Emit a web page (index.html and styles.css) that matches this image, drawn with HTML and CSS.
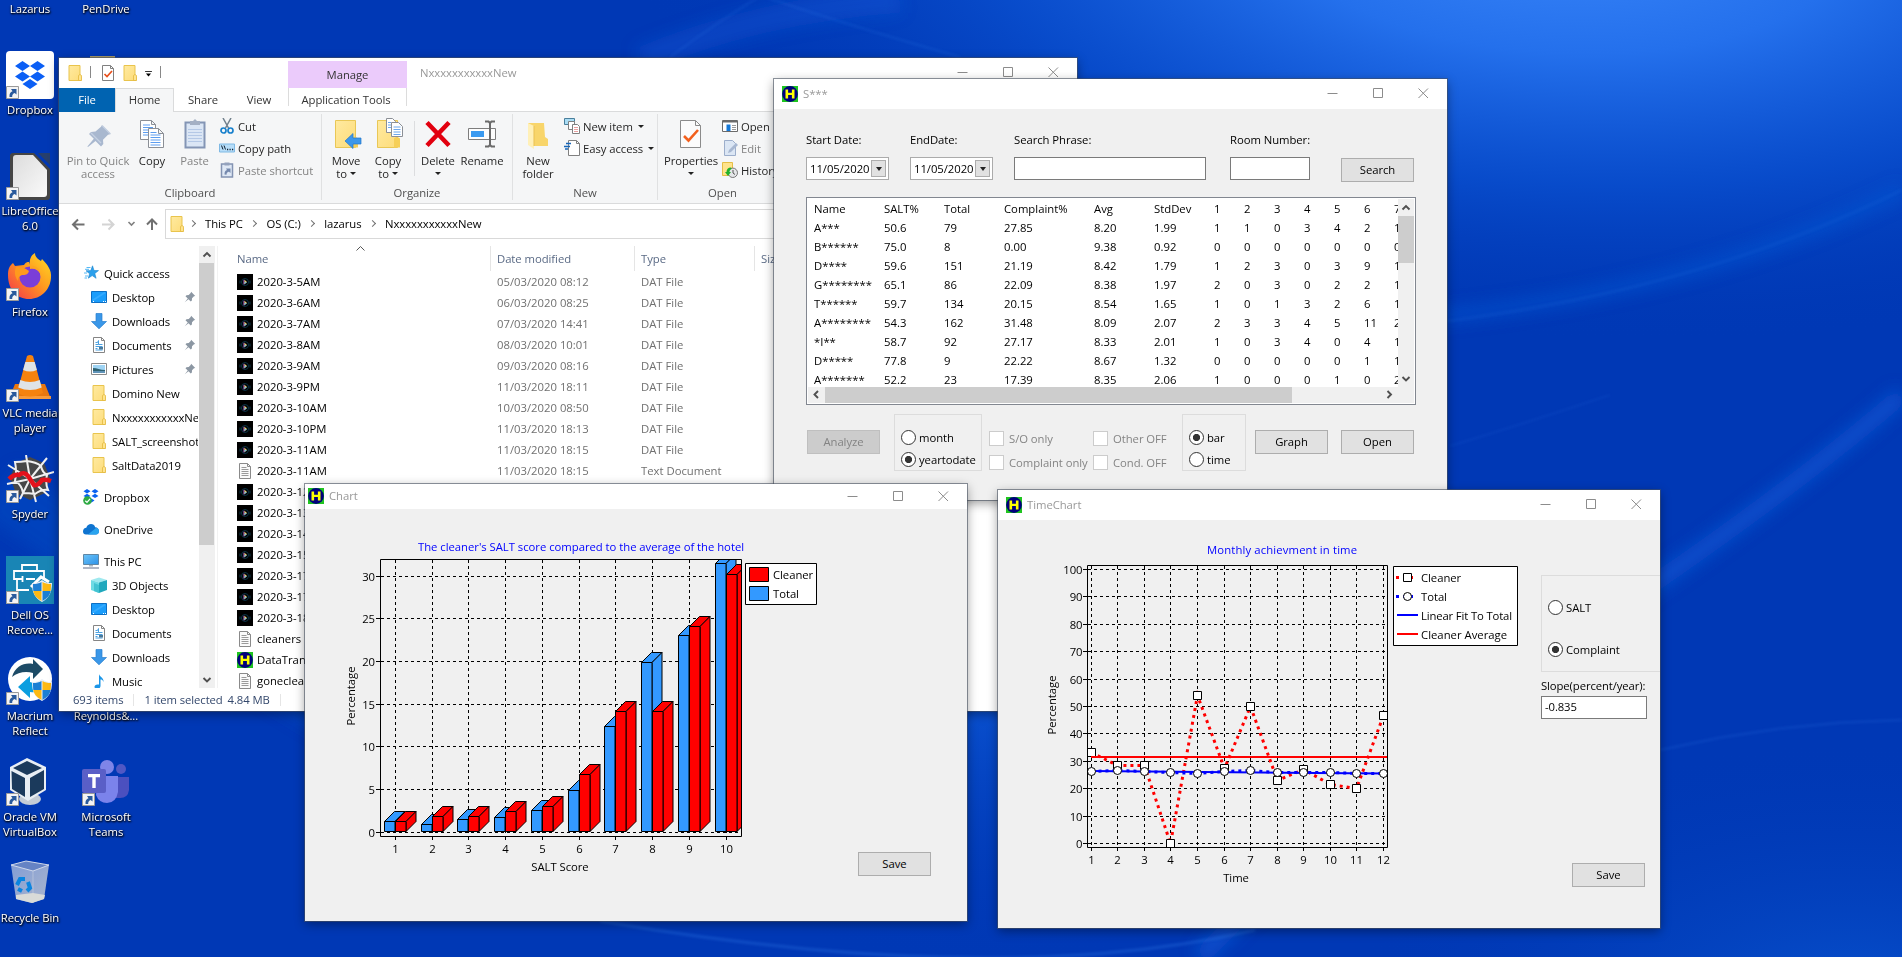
FILE: index.html
```html
<!DOCTYPE html>
<html lang="en">
<head>
<meta charset="utf-8">
<title>Desktop</title>
<link rel="stylesheet" href="styles.css">
</head>
<body>
<svg class="defs" width="0" height="0" aria-hidden="true">
  <defs>
    <linearGradient id="gFolder" x1="0" y1="0" x2="1" y2="1"><stop offset="0" stop-color="#ffeaa0"/><stop offset="1" stop-color="#fddc7a"/></linearGradient>
    <linearGradient id="gScreen" x1="0" y1="0" x2="1" y2="1"><stop offset="0" stop-color="#6cc4f8"/><stop offset="1" stop-color="#2d92e8"/></linearGradient>
    <linearGradient id="gFox" x1="1" y1="0" x2="0" y2="1"><stop offset="0" stop-color="#ffe226"/><stop offset=".45" stop-color="#ff9a1f"/><stop offset="1" stop-color="#f5304e"/></linearGradient>
    <linearGradient id="gPaper" x1="0" y1="0" x2="1" y2="1"><stop offset="0" stop-color="#dcdcdc"/><stop offset="1" stop-color="#fafafa"/></linearGradient>
    <linearGradient id="gBin" x1="0" y1="0" x2="1" y2="1"><stop offset="0" stop-color="#8fa6d8"/><stop offset="1" stop-color="#b9c2d0"/></linearGradient>

    <symbol id="folder" viewBox="0 0 16 16"><path d="M2 .5h11v11l1 .7v3.3H2z" fill="url(#gFolder)" stroke="#e9c44c"/><path d="M11.500 15.500v-5l1.500-1 1.500 1v5z" fill="#ffe48e" stroke="#e3b93e" stroke-width=".8"/></symbol>
    <symbol id="hicon" viewBox="0 0 16 16"><path fill="#1fc41f" d="M0 0h16v16H0z"/><circle cx="8" cy="8" r="7.900" fill="#00007c"/><path d="M3.500 3.500h2.600v3.300h3.800V3.500h2.600v9H9.900V9H6.100v3.500H3.500z" fill="#ff0"/></symbol>
    <symbol id="dat" viewBox="0 0 16 16"><path d="M0 0h16v16H0z"/><circle cx="8" cy="8" r="3.500" fill="none" stroke="#0a3446"/><path d="M3 6.500v3M13 6.500v3" stroke="#0a3446"/><path d="M7 5.800v4.600" stroke="#c86ae0" stroke-width="1"/><path d="M7.500 5.800 10 8l-2.500 2.200z" fill="#e8d070"/><path d="M7.500 8H10l-2.500 2.200z" fill="#7cc0e0"/></symbol>
    <symbol id="txt" viewBox="0 0 16 16"><path d="M2.500.5h8l3 3v12h-11z" fill="#fafafa" stroke="#8a8a8a"/><path d="M10.500.5v3h3" fill="none" stroke="#8a8a8a"/><path d="M4.500 4.500h5M4.500 6.500h7M4.500 8.500h7M4.500 10.500h7M4.500 12.500h7" stroke="#9a9a9a"/></symbol>
    <symbol id="star" viewBox="0 0 16 16"><path d="M9.500.8 11 5.500l4.500.1-3.700 2.900 1.300 4.800-3.900-2.700-3.900 2.600 1.300-4.500L3 5.800l4.800-.2z" fill="#2ba0ec" stroke="#1c86cf" stroke-width=".6"/><path d="M3.500 2.500h4M2 4.300h4M1 8h3M2 11h3M1.500 13h2.500" stroke="#56b8f4"/></symbol>
    <symbol id="desk" viewBox="0 0 16 16"><path d="M.5 2.500h15v11H.5z" fill="#1b9dfb" stroke="#0d6fc4"/><path d="M1.500 11.500 14 3.500" stroke="#35aaff" stroke-width="2"/><path d="M2 12.500h1M12 12.500h1M14 12.500h1" stroke="#fff"/></symbol>
    <symbol id="down" viewBox="0 0 16 16"><path d="M5 .5h6v8h4.500L8 15.800.5 8.500H5z" fill="#3a97e8" stroke="#2a80cf" stroke-width=".7"/></symbol>
    <symbol id="docs" viewBox="0 0 16 16"><path d="M2.500.5h8l3 3v12h-11z" fill="#fff" stroke="#858585"/><path d="M10.500.5v3h3" fill="none" stroke="#858585"/><path d="M4.500 5.500h2l1-2v4h4M4.500 7.500h3M4.500 9.500h7M4.500 11.500h2M4.500 13h7" stroke="#4aa0e0" fill="none"/><path d="M8 10h4v2.500H8z" fill="#4d7a9a"/></symbol>
    <symbol id="pics" viewBox="0 0 16 16"><path d="M.5 2.500h15v11H.5z" fill="#fff" stroke="#8a8a8a"/><path d="M2 4h12v8H2z" fill="#9fd4f4"/><path d="M2 7c4 0 7 2 12 2v3H2z" fill="#2f6271"/><path d="M2 10h12v2H2z" fill="#5f93b8"/></symbol>
    <symbol id="dbx" viewBox="0 0 16 16"><path d="M4 0l3.500 2.200L4 4.400.5 2.200zM12 0l3.500 2.200L12 4.400 8.500 2.200zM4 4.700l3.500 2.200L4 9.100.5 6.900zM12 4.700l3.500 2.200L12 9.100 8.500 6.900zM8.500 9.500l3 2-3 2-3-2z" fill="#0a62f0"/><circle cx="4.500" cy="11.500" r="4.300" fill="#2eaa43"/><path d="M2.300 11.700l1.700 1.700 3-3.500" fill="none" stroke="#fff" stroke-width="1.300"/></symbol>
    <symbol id="cloud" viewBox="0 0 16 16"><path d="M0 10.500C0 8 1.500 6.700 3.300 6.700 4 4.200 6 3 8 3c2 0 3.600 1.200 4.200 3.200C14.500 6.300 16 8 16 10s-1.300 3.500-3.200 3.500H3C1.200 13.500 0 12.200 0 10.500z" fill="#0f74d0"/><path d="M5 13.500 13 7c2 .2 3 1.600 3 3.200 0 2-1.300 3.300-3.200 3.300z" fill="#2aa4ef"/></symbol>
    <symbol id="pc" viewBox="0 0 16 16"><path d="M.5 1.500h15v10H.5z" fill="url(#gScreen)" stroke="#5f87a5"/><path d="M6 12h4v1.500H6z" fill="#a9b6c0"/><path d="M0 15h16" stroke="#8e99ad" stroke-width="1.400"/></symbol>
    <symbol id="cube" viewBox="0 0 16 16"><path d="M0 3 8 .5 16 3 8 5.500z" fill="#9fe9ef"/><path d="M0 3l8 2.500V16l-8-3z" fill="#6fdbe4"/><path d="M16 3 8 5.500V16l8-3z" fill="#20a8bd"/><path d="M3 6l5 2v8l-5-2z" fill="#43c3d2"/></symbol>
    <symbol id="music" viewBox="0 0 16 16"><path d="M8 1c.5 3 5 3.500 4.500 8-.5-2-2-2.500-3-2.500V13c0 1.800-1.500 3-3.200 3S3.500 15 3.500 13.800s1.200-2.300 3-2.300H8z" fill="#1b96e8"/></symbol>
    <symbol id="pin" viewBox="0 0 16 16"><path d="M9.500 1 15 6.500l-1.700.6-2.600 2.600-.2 3-1.500 1.200-3-3L1 15l4-5-3-3 1.300-1.500 3-.2L8.900 2.700z" fill="#8c97a3"/></symbol>
    <symbol id="bigpin" viewBox="0 0 32 32"><path d="M20 7l9 9-3 .7-5 5 .3 4.300-2.300 2.500-5.500-5.500L6 29l-.6-.6 6.400-7.600L7 16l2-2 4.500-.5 5.500-4.700z" fill="#a9b8cf"/><path d="M20.500 8l7.500 7.500M9 15l10 10" stroke="#c5d0e2" stroke-width="1.300"/></symbol>
    <symbol id="copy" viewBox="0 0 32 32"><g fill="#fff" stroke="#8b8f96"><path d="M4.500 2.500h11l4 4v15h-15zM15.500 2.500v4h4"/><path d="M12.500 10.500h10l5 5v14h-15zM22.500 10.500v5h5"/></g><path d="M7 7h7M7 9.500h10M7 12h5M7 14.500h5M7 17h5M14.500 14.500h6M14.500 17h10M14.500 19.500h10M14.500 22h10M14.500 24.500h10M14.500 27h10" stroke="#5c9df0"/></symbol>
    <symbol id="paste" viewBox="0 0 32 32"><path d="M6.500 4.500h19v25h-19z" fill="#dbe6f5" stroke="#8495b5" stroke-width="2"/><path d="M11 3h3l2-2 2 2h3v4H11z" fill="#a4b0c4"/><path d="M9 11.500h14M9 14.500h14M9 17.500h14M9 20.500h14M9 23.500h14" stroke="#b4c8e6"/></symbol>
    <symbol id="cut" viewBox="0 0 16 16"><path d="M4 0l5.500 10M12 0 6.500 10" stroke="#72808c" stroke-width="1.500"/><circle cx="4.500" cy="12.500" r="2.500" fill="none" stroke="#1880cc" stroke-width="1.700"/><circle cx="11.500" cy="12.500" r="2.500" fill="none" stroke="#1880cc" stroke-width="1.700"/></symbol>
    <symbol id="path" viewBox="0 0 16 16"><path d="M.5 4h15v8H.5z" fill="#b7ddf8" stroke="#7fb9e4"/><path d="M2.500 5.500l1.500 4M5 5.500l1.500 4" stroke="#102030"/><path d="M8 9.500h1.200M10.500 9.500h1.200M13 9.500h1.200" stroke="#102030" stroke-width="1.400"/></symbol>
    <symbol id="pshort" viewBox="0 0 16 16"><path d="M2.500 2h11v13h-11z" fill="#dfe8f5" stroke="#8393b2" stroke-width="1.500"/><path d="M5.500.5h5v3h-5z" fill="#94a2bc"/><path d="M5.500 12.500c0-3 1-4 2.500-4.500L7 6.500h4.500V11L10 9.700c-1.700.3-2.500 1.300-2.500 3z" fill="#7589ae"/></symbol>
    <symbol id="bigfolder" viewBox="0 0 32 32"><path d="M5.500 2.500h20v27h-20z" fill="url(#gFolder)" stroke="#e9c756"/><path d="M22 29.500v-9l3-2 3 2v9z" fill="#f6cf58"/></symbol>
    <symbol id="moveto" viewBox="0 0 32 32"><use href="#bigfolder" width="32" height="32"/><path d="M15 23l8-7.500v4.500h8v6h-8v4.500z" fill="#3d97ea" stroke="#2277c8" stroke-width=".7"/></symbol>
    <symbol id="copyto" viewBox="0 0 32 32"><use href="#bigfolder" width="32" height="32"/><g fill="#fff" stroke="#8b8f96"><path d="M14.500.5h6l3 3v11h-9z"/><path d="M19.500 4.500h7l4 4v10h-11z"/></g><path d="M16 4.500h3M16 7h3M16 9.500h3M21.500 9h7M21.500 11.500h7M21.500 14h7M21.500 16.500h7" stroke="#6da8ee"/></symbol>
    <symbol id="delete" viewBox="0 0 32 32"><path d="M5 4.500l22 23M27 4.500l-22 23" stroke="#e2000f" stroke-width="4.600"/></symbol>
    <symbol id="rename" viewBox="0 0 32 32"><path d="M2.500 10.500h27v11h-27z" fill="#fdfdfd" stroke="#7d7d7d"/><path d="M5 13h13v6H5z" fill="#3a9af0"/><path d="M19 3.500h3.500l1.500 1.500 1.500-1.500H29M19 28.500h3.500L24 27l1.500 1.500H29M24 5v22" fill="none" stroke="#6a6a6a" stroke-width="2"/></symbol>
    <symbol id="newfolder" viewBox="0 0 32 32"><path d="M6 5h16l1 14 3 2v7H12z" fill="#f8d56b"/><path d="M6 5l6 3v23l-6-4z" fill="#fff0b8"/><path d="M12 8v20" stroke="#e9c152"/></symbol>
    <symbol id="newitem" viewBox="0 0 16 16"><path d="M.5.5h10v6H.5z" fill="#a9dcf4" stroke="#4a7f9c"/><path d="M4.500 3.500h6v8h-6z" fill="#fff" stroke="#808080"/><path d="M8.500 6.500h5l2 2v7h-7z" fill="#fff" stroke="#808080"/><path d="M10 9.500h4M10 11.500h4M10 13.500h4" stroke="#e8a0a0"/></symbol>
    <symbol id="easy" viewBox="0 0 16 16"><path d="M4.500.5h8l3 3v12h-11z" fill="#fff" stroke="#808080"/><path d="M12.500.5v3h3" fill="none" stroke="#808080"/><path d="M2 3.500h5M0 6.500h6M1 9h3" stroke="#1766b8" stroke-width="1.300"/></symbol>
    <symbol id="props" viewBox="0 0 32 32"><path d="M5.500 2.500h15l5 5v22h-20z" fill="#fbfbfb" stroke="#8b8b8b"/><path d="M20.500 2.500v5h5" fill="none" stroke="#8b8b8b"/><path d="M9 18l4.500 4.500L23 12" fill="none" stroke="#f2601d" stroke-width="2.600"/></symbol>
    <symbol id="openw" viewBox="0 0 16 16"><path d="M.5 2.500h15v11H.5z" fill="#fff" stroke="#6b6b6b"/><path d="M1 3.500h14" stroke="#6b6b6b" stroke-width="2"/><path d="M4.500 6.500h4V13h-4z" fill="#1579d8"/><path d="M10 7.500h4M10 9.500h4M10 11.500h4" stroke="#999"/></symbol>
    <symbol id="edit" viewBox="0 0 16 16"><path d="M2.500.5h8l3 3v12h-11z" fill="#dbe6f4" stroke="#9caecb"/><path d="M6 13l1-3 7-7 2 2-7 7z" fill="#a7b7d1"/></symbol>
    <symbol id="hist" viewBox="0 0 16 16"><path d="M.5.500h10v13H.5z" fill="#ffe38c" stroke="#e5be45"/><circle cx="10.800" cy="10.800" r="4.700" fill="#e4e6e8" stroke="#777"/><path d="M11 8v3l2 1.500" fill="none" stroke="#555"/><path d="M9 5.500c-3 0-4.500 2-4.500 4.500H3l3 4 3-4H7.500c0-1.500.6-2.500 2-3z" fill="#22b12b"/></symbol>
    <symbol id="qprops" viewBox="0 0 16 16"><path d="M2.500.5h8l3 3v12h-11z" fill="#fff" stroke="#808080"/><path d="M10.500.5v3h3" fill="none" stroke="#808080"/><path d="M4.500 9l2.500 2.500L12 6" fill="none" stroke="#e8501c" stroke-width="1.700"/></symbol>

    <symbol id="shortcut" viewBox="0 0 13 13"><path d="M.5.500h12v12H.5z" fill="#f4f4f4" stroke="#9a9a9a"/><path d="M3.500 11c-.3-3.500.8-5 3-5.800L5 3h5.500v5.500L8.700 7C7 7.500 6 9 6.200 11z" fill="#2a5a9c"/></symbol>
    <symbol id="shield" viewBox="0 0 20 22"><path d="M10 0c3 2.500 6 3 10 3 0 10-3 15-10 19C3 18 0 13 0 3c4 0 7-.5 10-3z" fill="#e8eef6"/><path d="M9.500 2v9H1.300C1 8.500 1 6 1 4c3.500 0 6-.5 8.500-2zM10.500 11h8.200c-.8 4-3 7-8.200 10z" fill="#1c7fd4"/><path d="M10.500 2v9h8.200C19 8.500 19 6 19 4c-3.500 0-6-.5-8.500-2zM9.500 11H1.300c.8 4 3 7 8.200 10z" fill="#fdb913"/></symbol>
    <symbol id="d-dropbox" viewBox="0 0 48 48"><rect width="48" height="48" rx="4" fill="#fff"/><path d="M16.500 10l7.500 5-7.500 5L9 15zM31.500 10l7.500 5-7.500 5-7.500-5zM16.500 20.500l7.500 5-7.500 5-7.500-5zM31.500 20.500l7.500 5-7.500 5-7.500-5zM24 28l7.500 5-7.500 5-7.500-5z" fill="#0b5ff5"/></symbol>
    <symbol id="d-libre" viewBox="0 0 48 48"><path d="M4 4q0-3 3-3h21l16 16v28q0 3-3 3H7q-3 0-3-3z" fill="#454545"/><path d="M7 6q0-3 3-3h17l14 15v24q0 3-3 3H10q-3 0-3-3z" fill="url(#gPaper)"/><path d="M32 1h12v12z" fill="#273f6c"/></symbol>
    <symbol id="d-fox" viewBox="0 0 48 48"><path d="M2 22c0-5 1-9 5-12l2 3c3 0 6-1 9-1 2-3 3-3 5-3l1 3c-1-5 1-10 5-12 0 4 3 6 6 8l1-2c5 5 10 11 9 19-1 12-10 21-22 21S2 37 2 22z" fill="url(#gFox)"/><circle cx="24" cy="24" r="10.500" fill="#7a3ed8"/><path d="M24 13c6-1 10 3 10.500 8-2-4-6-6-10.500-5z" fill="#ffa51f"/><path d="M10 14c5 0 8 0 13 4-1 4-4 4-7 4-3 1-4 3-4 6-3-4-4-9-2-14z" fill="#ff9a1d"/></symbol>
    <symbol id="d-vlc" viewBox="0 0 48 48"><path d="M9 30h30l6 15H3z" fill="#e8770f"/><path d="M3 42h42v3H3z" fill="#f89a3a"/><path d="M21 2q3-2 6 0l10 37q-13 7-26 0z" fill="#f5820f"/><path d="M19.300 8h9.400l2.200 8q-6.900 3-13.800 0zM14.300 26q9.700 4 19.400 0l2 7.500q-11.700 5-23.400 0z" fill="#dfe3e6"/></symbol>
    <symbol id="d-spyder" viewBox="0 0 48 48"><path d="M24 2l14 6 6 15-5 15-15 7-14-7-6-15 6-15z" fill="#474747"/><g stroke="#f0f0f0" stroke-width="2" fill="none"><path d="M24 24 20 0M24 24 41 3M24 24 48 17M24 24 43 41M24 24 30 47M24 24 14 44M24 24 1 29M24 24 2 10M9 7q6 0 12-1 9 1 14 5 1 6 6 9-2 8 1 15-6-1-13 4-6-1-12-1-1-8-8-12 2-9 0-19z"/></g><path d="M3 24q5-5 10-4 5-4 9 1l6 9q4 1 8-5 4-1 9 1" fill="none" stroke="#e3121c" stroke-width="4.500"/></symbol>
    <symbol id="d-dell" viewBox="0 0 48 48"><path fill="#1985b5" d="M0 0h48v48H0z"/><g fill="none" stroke="#fff" stroke-width="1.800"><path d="M16 14V9h15v5M8 24v-9h30v8M8 23h8M20 23h9M16.500 20v6M11 24v10h12"/><path d="M25 31l10-10 8 5" stroke-width="3"/></g><use href="#shield" x="26" y="24" width="20" height="22"/></symbol>
    <symbol id="d-macrium" viewBox="0 0 48 48"><circle cx="24" cy="22" r="22" fill="#fff"/><path d="M6 20C9 9 19 5 27 7V2l10 10-10 10v-6C20 14 12 15 6 20z" fill="#1d4b66"/><path d="M43 27c-4 7-11 9-19 8v6L12 30l12-11v6c8 3 14 4 19 2z" fill="#0a9ee0"/><use href="#shield" x="26" y="22" width="20" height="22"/></symbol>
    <symbol id="d-vbox" viewBox="0 0 48 48"><ellipse cx="24" cy="41" rx="11" ry="6" fill="#c4ccd6"/><path d="M21 0 40 9v23L22 43 4 32V9z" fill="#e8eef4"/><path d="M21 3 36 10 21 17 7 10zM5.500 13 19 20v19L6 31zM24 20l14-8v19L24 39z" fill="#1b3a5c"/></symbol>
    <symbol id="d-bin" viewBox="0 0 48 48"><path d="M5 6l38 0-5 34-12 4-16-4z" fill="url(#gBin)" opacity=".92"/><path d="M5 6 20 2l23 4-16 6z" fill="#6583c4" stroke="#cfd8ea"/><path d="M27 12v32" stroke="#c6cede" opacity=".6"/><path d="M10 36l17-2 12 2-1 4-12 4-16-4z" fill="#d9dbd8"/><g fill="none" stroke="#0a84e0" stroke-width="4"><path d="M11 26l3-6 5 0M22 23l2 6-3 3M16 32l-4-2"/></g></symbol>
    <symbol id="d-teams" viewBox="0 0 48 48"><circle cx="25" cy="9" r="7" fill="#7f85e8"/><circle cx="39" cy="11" r="5" fill="#5158c4"/><path d="M30 19h17v13q-1 8-9 8h-8z" fill="#4b50bf"/><path d="M16 18h20v16q-2 11-11 11-8 0-11-8z" fill="#7b83eb"/><rect y="11" width="24" height="24" rx="2" fill="#5a5fc7"/><path d="M6 16h12v3.200h-4.300V30h-3.400V19.200H6z" fill="#fff"/></symbol>
  </defs>
</svg>

<div class="desktop">
  <svg class="wallpaper" viewBox="0 0 1902 957" preserveAspectRatio="none">
    <defs>
      <radialGradient id="wTop" gradientUnits="userSpaceOnUse" cx="0" cy="0" r="1" gradientTransform="translate(1560 -70) rotate(3) scale(960 410)"><stop offset="0" stop-color="#3a86fa"/><stop offset=".3" stop-color="#2470ec"/><stop offset=".62" stop-color="#0a50d0" stop-opacity=".8"/><stop offset="1" stop-color="#0038b5" stop-opacity="0"/></radialGradient>
      <radialGradient id="wMid" gradientUnits="userSpaceOnUse" cx="0" cy="0" r="1" gradientTransform="translate(980 640) scale(420 330)"><stop offset="0" stop-color="#0e5cdc"/><stop offset="1" stop-color="#0038b5" stop-opacity="0"/></radialGradient>
      <radialGradient id="wBr" gradientUnits="userSpaceOnUse" cx="0" cy="0" r="1" gradientTransform="translate(1850 1000) scale(500 260)"><stop offset="0" stop-color="#0750cc"/><stop offset="1" stop-color="#0038b5" stop-opacity="0"/></radialGradient>
      <filter id="soft" x="-20%" y="-20%" width="140%" height="140%"><feGaussianBlur stdDeviation="8"/></filter>
      <filter id="soft2" x="-20%" y="-50%" width="140%" height="200%"><feGaussianBlur stdDeviation="1.500"/></filter>
    </defs>
    <path fill="#0038b5" d="M0 0h1902v957H0z"/>
    <path fill="url(#wTop)" d="M0 0h1902v957H0z"/>
    <path fill="url(#wMid)" d="M0 0h1902v957H0z"/>
    <path fill="url(#wBr)" d="M0 0h1902v957H0z"/>
    <g fill="none" filter="url(#soft)">
      <path d="M1902 395Q1780 500 1600 620T1200 957" stroke="#0a5ad8" stroke-width="18" opacity=".65"/>
      <path d="M1902 190Q1700 290 1440 316" stroke="#0a5ad8" stroke-width="14" opacity=".5"/>
      <path d="M0 490Q300 700 600 860" stroke="#0a52cc" stroke-width="60" opacity=".35"/>
      <path d="M640 60Q760 10 900 0" stroke="#1560e0" stroke-width="26" opacity=".3"/>
    </g>
    <g fill="none" stroke="#3a86f0" filter="url(#soft2)" opacity=".4">
      <path d="M670 57Q720 20 770-10M760-5Q830 20 960 57"/>
      <path d="M1440 322Q1700 290 1902 190" stroke-width="2" opacity=".4"/>
      <path d="M1660 750Q1780 722 1902 720"/>
      <path d="M1450 446Q1520 425 1610 395" opacity=".6"/>
      <path d="M600 921Q1000 990 1255 930" stroke-width="2"/>
    </g>
  </svg>

  <div class="icons">
    <div class="dicon r1 c1"><i class="pic"></i><span>Lazarus</span></div>
    <div class="dicon r2 c1"><i class="pic"><svg><use href="#d-dropbox"/></svg><svg class="sc"><use href="#shortcut"/></svg></i><span>Dropbox</span></div>
    <div class="dicon r3 c1"><i class="pic"><svg><use href="#d-libre"/></svg><svg class="sc"><use href="#shortcut"/></svg></i><span>LibreOffice<br>6.0</span></div>
    <div class="dicon r4 c1"><i class="pic"><svg><use href="#d-fox"/></svg><svg class="sc"><use href="#shortcut"/></svg></i><span>Firefox</span></div>
    <div class="dicon r5 c1"><i class="pic"><svg><use href="#d-vlc"/></svg><svg class="sc"><use href="#shortcut"/></svg></i><span>VLC media<br>player</span></div>
    <div class="dicon r6 c1"><i class="pic"><svg><use href="#d-spyder"/></svg><svg class="sc"><use href="#shortcut"/></svg></i><span>Spyder</span></div>
    <div class="dicon r7 c1"><i class="pic"><svg><use href="#d-dell"/></svg><svg class="sc"><use href="#shortcut"/></svg></i><span>Dell OS<br>Recove...</span></div>
    <div class="dicon r8 c1"><i class="pic"><svg><use href="#d-macrium"/></svg><svg class="sc"><use href="#shortcut"/></svg></i><span>Macrium<br>Reflect</span></div>
    <div class="dicon r9 c1"><i class="pic"><svg><use href="#d-vbox"/></svg><svg class="sc"><use href="#shortcut"/></svg></i><span>Oracle VM<br>VirtualBox</span></div>
    <div class="dicon r10 c1"><i class="pic"><svg><use href="#d-bin"/></svg></i><span>Recycle Bin</span></div>
    <div class="dicon r1 c2"><i class="pic"></i><span>PenDrive</span></div>
    <div class="dicon r2 c2"><i class="pic sliver"></i></div>
    <div class="dicon r8 c2"><i class="pic"></i><span>Reynolds&amp;...</span></div>
    <div class="dicon r9 c2"><i class="pic"><svg><use href="#d-teams"/></svg><svg class="sc"><use href="#shortcut"/></svg></i><span>Microsoft<br>Teams</span></div>
  </div>

  <section class="win explorer">
    <div class="ex-title">
      <div class="quick"><svg class="i16"><use href="#folder"/></svg><i class="bar"></i><svg class="i16"><use href="#qprops"/></svg><svg class="i16"><use href="#folder"/></svg><svg class="caret" viewBox="0 0 8 7"><path d="M0 .5h8" stroke="#000"/><path d="M1 3h6L4 6.500z"/></svg><i class="bar last"></i></div>
      <div class="manage">Manage</div>
      <div class="ex-name">NxxxxxxxxxxxNew</div>
      <svg class="ctl" width="102" height="12" viewBox="0 0 102 12"><path d="M.5 6.500h10M46.500 1.500h9v9h-9zM91.500 1.500l9.500 9.500M101 1.500l-9.500 9.500" fill="none" stroke="#8c8c8c"/></svg>
    </div>
    <div class="tabs"><span class="tab file">File</span><span class="tab home">Home</span><span class="tab share">Share</span><span class="tab view">View</span><span class="tab tools">Application Tools</span></div>
    <div class="ribbon">
      <div class="group g-clip">
        <div class="gbody">
          <div class="big dim w64"><svg><use href="#bigpin"/></svg><b>Pin to Quick<br>access</b></div>
          <div class="big w44"><svg><use href="#copy"/></svg><b>Copy</b></div>
          <div class="big dim w41"><svg><use href="#paste"/></svg><b>Paste</b></div>
          <div class="small"><p><svg><use href="#cut"/></svg>Cut</p><p><svg><use href="#path"/></svg>Copy path</p><p class="dim"><svg><use href="#pshort"/></svg>Paste shortcut</p></div>
        </div>
        <div class="glabel">Clipboard</div>
      </div>
      <div class="group g-org">
        <div class="gbody">
          <div class="big w42"><svg><use href="#moveto"/></svg><b>Move<br>to <i class="dd"></i></b></div>
          <div class="big w42"><svg><use href="#copyto"/></svg><b>Copy<br>to <i class="dd"></i></b></div>
          <i class="vsep"></i>
          <div class="big w40"><svg><use href="#delete"/></svg><b>Delete<br><i class="dd"></i></b></div>
          <div class="big w48"><svg><use href="#rename"/></svg><b>Rename</b></div>
        </div>
        <div class="glabel">Organize</div>
      </div>
      <div class="group g-new">
        <div class="gbody">
          <div class="big w44"><svg><use href="#newfolder"/></svg><b>New<br>folder</b></div>
          <div class="small"><p><svg><use href="#newitem"/></svg>New item <i class="dd"></i></p><p><svg><use href="#easy"/></svg>Easy access <i class="dd"></i></p></div>
        </div>
        <div class="glabel">New</div>
      </div>
      <div class="group g-open">
        <div class="gbody">
          <div class="big w60"><svg><use href="#props"/></svg><b>Properties<br><i class="dd"></i></b></div>
          <div class="small"><p><svg><use href="#openw"/></svg>Open</p><p class="dim"><svg><use href="#edit"/></svg>Edit</p><p><svg><use href="#hist"/></svg>History</p></div>
        </div>
        <div class="glabel">Open</div>
      </div>
    </div>
    <div class="nav">
      <svg class="arrows" width="106" height="30" viewBox="0 0 106 30"><g fill="none" stroke-width="2"><path d="M25.500 15.500H14M19 10.500l-5 5 5 5" stroke="#707070"/><path d="M43 15.500h11M49.500 10.500l5 5-5 5" stroke="#d4d4d4"/><path d="M69.500 13l3 3 3-3" stroke="#808080" stroke-width="1.600"/><path d="M93 21V10.500M88 15.500l5-5 5 5" stroke="#707070"/></g></svg>
      <div class="addr"><svg class="i16"><use href="#folder"/></svg><i class="chev"></i><span>This PC</span><i class="chev"></i><span>OS (C:)</span><i class="chev"></i><span>lazarus</span><i class="chev"></i><span>NxxxxxxxxxxxNew</span></div>
    </div>
    <div class="ex-main">
      <div class="side" id="side"></div>
      <div class="vscroll"><svg viewBox="0 0 16 17"><path d="M4.500 10.500 8 7l3.500 3.500" fill="none" stroke="#505050" stroke-width="1.900"/></svg><i class="thumb"></i><svg class="end" viewBox="0 0 16 17"><path d="M4.500 7 8 10.500 11.500 7" fill="none" stroke="#505050" stroke-width="1.900"/></svg></div>
      <div class="files">
        <div class="fhead"><span class="f1">Name<svg width="9" height="5" viewBox="0 0 9 5"><path d="M.5 4.500l4-4 4 4" fill="none" stroke="#555"/></svg></span><span class="f2">Date modified</span><span class="f3">Type</span><span class="f4">Size</span></div>
        <div id="files"></div>
      </div>
    </div>
    <div class="status"><span>693 items</span><i></i><span>1 item selected</span><span class="sz">4.84 MB</span><i></i></div>
  </section>

  <section class="win salt">
    <header class="bar30"><svg class="i16"><use href="#hicon"/></svg><span>S***</span><svg class="ctl" width="102" height="12" viewBox="0 0 102 12"><path d="M.5 6.500h10M46.500 1.500h9v9h-9zM91.500 1.500l9.500 9.500M101 1.500l-9.500 9.500" fill="none" stroke="#8c8c8c"/></svg></header>
    <div class="form">
      <label class="fld d">Start Date:<span class="inp date">11/05/2020<i><b class="dd"></b></i></span></label>
      <label class="fld d">EndDate:<span class="inp date">11/05/2020<i><b class="dd"></b></i></span></label>
      <label class="fld ph">Search Phrase:<span class="inp"></span></label>
      <label class="fld rn">Room Number:<span class="inp"></span></label>
      <span class="btn">Search</span>
    </div>
    <div class="list">
      <div class="ltop"><div class="rows" id="rows"></div>
        <div class="vs"><svg viewBox="0 0 16 17"><path d="M4.500 10.500 8 7l3.500 3.500" fill="none" stroke="#505050" stroke-width="1.900"/></svg><i></i><svg class="end" viewBox="0 0 16 17"><path d="M4.500 7 8 10.500 11.500 7" fill="none" stroke="#505050" stroke-width="1.900"/></svg></div></div>
      <div class="hs"><svg viewBox="0 0 17 16"><path d="M10 4 6.500 7.500 10 11" fill="none" stroke="#505050" stroke-width="1.900"/></svg><i></i><svg class="end" viewBox="0 0 17 16"><path d="M6.500 4 10 7.500 6.500 11" fill="none" stroke="#505050" stroke-width="1.900"/></svg></div>
    </div>
    <div class="opts">
      <span class="btn off">Analyze</span>
      <div class="gb gb1"><span class="rad">month</span><span class="rad on">yeartodate</span></div>
      <div class="checks"><span>S/O only</span><span>Other OFF</span><span>Complaint only</span><span>Cond. OFF</span></div>
      <div class="gb gb2"><span class="rad on">bar</span><span class="rad">time</span></div>
      <span class="btn">Graph</span>
      <span class="btn open">Open</span>
    </div>
  </section>

  <section class="win chart">
    <header class="bar25"><svg class="i16"><use href="#hicon"/></svg><span>Chart</span><svg class="ctl" width="102" height="12" viewBox="0 0 102 12"><path d="M.5 6.500h10M46.500 1.500h9v9h-9zM91.500 1.500l9.500 9.500M101 1.500l-9.500 9.500" fill="none" stroke="#8c8c8c"/></svg></header>
    <div class="cbody"><svg id="bars" width="553" height="411" viewBox="305 509 553 411"></svg><span class="btn save1">Save</span></div>
  </section>

  <section class="win time">
    <header class="bar30"><svg class="i16"><use href="#hicon"/></svg><span>TimeChart</span><svg class="ctl" width="102" height="12" viewBox="0 0 102 12"><path d="M.5 6.500h10M46.500 1.500h9v9h-9zM91.500 1.500l9.500 9.500M101 1.500l-9.500 9.500" fill="none" stroke="#8c8c8c"/></svg></header>
    <div class="cbody"><svg id="lines" width="543" height="408" viewBox="998 520 543 408"></svg>
      <div class="tside"><div class="gb gb3"><span class="rad">SALT</span><span class="rad on">Complaint</span></div><label>Slope(percent/year):<span class="inp">-0.835</span></label><span class="btn save2">Save</span></div>
    </div>
  </section>
</div>
<script src="app.js"></script>
</body>
</html>
```
FILE: styles.css
```css
* { box-sizing: border-box; }
body { margin: 0; overflow: hidden; font: 11.3px/15px "Open Sans", "Noto Sans", sans-serif; letter-spacing: -.05px; color: #000; }
i, b { font-style: normal; font-weight: normal; }
p { margin: 0; }
svg { display: block; flex: none; }
.defs { position: absolute; }
.i16 { width: 16px; height: 16px; }
.dd { display: inline-block; border: solid transparent; border-width: 3px 3px 0; border-top-color: #222; vertical-align: 2px; }
.desktop { position: relative; width: 1902px; height: 957px; overflow: hidden; }
.wallpaper { position: absolute; inset: 0; width: 1902px; height: 957px; }

/* desktop icons */
.icons { position: absolute; left: -8px; top: -50px; display: grid; grid-template-columns: 76px 76px; grid-template-rows: repeat(10, 101px); }
.dicon { display: flex; flex-direction: column; align-items: center; color: #fff; text-align: center; white-space: nowrap; text-shadow: 1px 1px 2px #000, 0 1px 2px #000; }
.dicon .pic { position: relative; width: 48px; height: 48px; margin-bottom: 3px; }
.dicon .pic svg { width: 48px; height: 48px; }
.dicon .pic .sc { position: absolute; left: 0; bottom: 0; width: 13px; height: 13px; }
.dicon .sliver { width: 25px; margin: 5px 8px 0 0; background: #a89a68; }
.c1 { grid-column: 1; } .c2 { grid-column: 2; }
.r1 { grid-row: 1; } .r2 { grid-row: 2; } .r3 { grid-row: 3; } .r4 { grid-row: 4; } .r5 { grid-row: 5; }
.r6 { grid-row: 6; } .r7 { grid-row: 7; } .r8 { grid-row: 8; } .r9 { grid-row: 9; } .r10 { grid-row: 10; }

/* windows */
.win { position: absolute; display: flex; flex-direction: column; background: #f0f0f0; box-shadow: 0 0 0 1px rgba(70,80,95,.6), 0 3px 10px rgba(0,0,0,.4); overflow: hidden; }
.explorer { left: 59px; top: 58px; width: 1018px; height: 653px; background: #fff; }
.salt { left: 774px; top: 79px; width: 673px; height: 421px; }
.chart { left: 305px; top: 484px; width: 662px; height: 437px; }
.time { left: 998px; top: 490px; width: 662px; height: 438px; }
.win header { display: flex; align-items: center; background: #fff; color: #999; padding: 0 17px 2px 8px; flex: none; }
.win header .i16 { margin-top: 1px; }
.win header span { flex: 1; margin-left: 5px; }
.bar30 { height: 30px; }
.win .bar25 { height: 25px; padding-left: 3px; }
.salt .bar30, .chart .bar25, .time .bar30 { padding-right: 18px; }
.btn { display: flex; align-items: center; justify-content: center; width: 73px; height: 24px; padding-bottom: 1px; background: #e1e1e1; border: 1px solid #adadad; }
.btn.off { background: #ccc; border-color: #bfbfbf; color: #838383; }
.inp { display: block; height: 23px; background: #fff; border: 1px solid #7a7a7a; }
.gb { border: 1px solid #dcdcdc; display: flex; flex-direction: column; }
.rad { display: flex; align-items: center; white-space: nowrap; }
.rad::before { content: ""; width: 13px; height: 13px; border: 1px solid #333; border-radius: 50%; background: #fff; margin-right: 3px; flex: none; }
.rad.on::before { background: radial-gradient(circle, #333 0 3.200px, #fff 4px); }

/* explorer */
.ex-title { display: flex; height: 30px; flex: none; padding-right: 18px; }
.quick { display: flex; width: 229px; padding: 7px 0 0 8px; }
.quick .bar { width: 1px; height: 12px; background: #888; margin: 1px 9px 0 7px; }
.quick .i16 + .i16 { margin-left: 6px; }
.quick .caret { width: 7px; height: 6px; margin: 6px 0 0 7px; }
.quick .bar.last { margin-left: 8px; }
.manage { width: 119px; margin-top: 3px; background: #ebcbfb; text-align: center; line-height: 28px; height: 27px; color: #333; }
.ex-name { flex: 1; margin-left: 13px; line-height: 29px; color: #999; }
.ex-title .ctl { margin-top: 8px; }
.tabs { display: flex; height: 24px; flex: none; border-bottom: 1px solid #dadbdc; color: #333; }
.tab { text-align: center; line-height: 23px; white-space: nowrap; height: 24px; }
.file { width: 56px; background: #0063b1; color: #fff; }
.home { width: 59px; margin-left: 0; background: #f5f6f7; border: 1px solid #dadbdc; border-bottom: 0; line-height: 21px; }
.share { width: 58px; } .view { width: 54px; margin-right: 2px; }
.tools { width: 119px; border: solid #dcdcdc; border-width: 0 1px; height: 18px; padding-right: 3px; }
.ribbon { display: flex; height: 92px; flex: none; background: #f5f6f7; border-bottom: 1px solid #dadbdc; color: #262626; }
.group { display: flex; flex-direction: column; border-right: 1px solid #e0e1e2; margin: 2px 0 3px; }
.g-clip { width: 263px; padding-left: 7px; } .g-org { width: 191px; padding-left: 3px; }
.g-new { width: 145px; padding-left: 3px; } .g-open { width: 130px; padding-left: 3px; }
.gbody { display: flex; height: 72px; flex: none; }
.glabel { text-align: center; color: #505050; line-height: 14px; height: 14px; }
.g-clip .glabel { margin-left: -7px; } .g-org .glabel, .g-new .glabel, .g-open .glabel { margin-left: -3px; }
.big { display: flex; flex-direction: column; align-items: center; text-align: center; line-height: 13px; white-space: nowrap; padding-top: 4px; }
.big svg { width: 32px; height: 32px; margin-bottom: 4px; }
.big .dd { vertical-align: 3px; }
.dim { color: #848484; }
.w64 { width: 64px; } .w44 { width: 44px; } .w41 { width: 41px; } .w42 { width: 42px; } .w40 { width: 40px; } .w48 { width: 48px; } .w60 { width: 60px; }
.vsep { width: 1px; height: 55px; background: #dcdddf; margin: 7px 3px 0 5px; }
.small { padding: 1px 0 0 4px; white-space: nowrap; }
.g-open .small { padding-left: 1px; }
.small p { display: flex; align-items: center; height: 22px; gap: 3px; }
.small .dd { margin-left: 2px; }
.small svg { width: 16px; height: 16px; }
.nav { display: flex; height: 42px; flex: none; padding-top: 5px; }
.addr { display: flex; align-items: center; flex: 1; height: 30px; border: 1px solid #d9d9d9; padding: 0 0 1px 3px; margin-right: 12px; }
.addr span { padding-bottom: 1px; }
.chev { width: 5px; height: 5px; border: solid #707070; border-width: 1.300px 1.300px 0 0; transform: rotate(45deg); margin: 0 10px 0 8.500px; }
.addr .i16 + .chev { margin-left: 5px; }
.ex-main { display: flex; height: 442px; }
.side { width: 140px; overflow: hidden; padding-top: 15px; }
.side div { display: flex; align-items: center; height: 24px; padding-left: 24px; white-space: nowrap; }
.side div svg { width: 16px; height: 16px; margin-right: 5px; }
.side .top { padding-left: 24px; }
.side .sub { padding-left: 32px; }
.side .gap { margin-top: 8px; }
.side span { overflow: hidden; flex: 1; margin-right: 1px; letter-spacing: -.1px; }
.side div .pn { width: 12px; height: 12px; margin-right: 3px; }
.vscroll { width: 16px; height: 442px; background: #f0f0f0; display: flex; flex-direction: column; }
.vscroll svg { width: 16px; height: 17px; }
.vscroll .thumb { height: 282px; width: 15px; background: #cdcdcd; }
.vscroll .end { margin-top: auto; }
.files { border-left: 1px solid #f2f2f2; margin-left: 2px; padding-left: 19px; flex: 1; }
.fhead { display: grid; grid-template-columns: 254px 144px 120px 60px; height: 25px; color: #5a6a85; line-height: 25px; }
.fhead span { border-right: 1px solid #e5e5e5; position: relative; }
.fhead .f2, .fhead .f3, .fhead .f4 { padding-left: 6px; }
.fhead svg { position: absolute; left: 119px; top: 0; }
.frow { display: grid; grid-template-columns: 260px 144px 120px; height: 21px; align-items: center; color: #707070; white-space: nowrap; }
.frow span { letter-spacing: 0; }
.frow span:first-child { display: flex; align-items: center; gap: 4px; color: #000; }
.status { display: flex; align-items: center; height: 23px; padding-left: 14px; color: #34486c; letter-spacing: -.1px; }
.status i { width: 1px; height: 12px; background: #e5e5e5; margin: 0 10px; }
.status .sz { margin-left: 5px; }

/* search window */
.form { display: flex; padding: 23px 0 0 32px; height: 88px; }
.fld { display: flex; flex-direction: column; gap: 10px; white-space: nowrap; margin-right: 21px; }
.fld.d { width: 83px; } .fld.ph { width: 192px; margin-right: 24px; } .fld.rn { width: 80px; margin-right: 31px; }
.form .btn { margin-top: 26px; }
.date { display: flex; align-items: center; padding: 0 2px 0 3px; border-color: #ababab; justify-content: space-between; }
.date i { display: flex; width: 15px; height: 17px; background: #e1e1e1; border: 1px solid #adadad; align-items: center; justify-content: center; }
.date .dd { border-width: 4px 3.500px 0; }
.list { width: 610px; height: 208px; margin-left: 32px; background: #fff; border: 1px solid #828790; padding: 1px; flex: none; }
.ltop { display: flex; height: 188px; }
.rows { width: 590px; height: 188px; overflow: hidden; padding: 0 0 0 6px; letter-spacing: 0; }
.rows div { display: grid; grid-template-columns: 70px 60px 60px 90px 60px 60px repeat(7, 30px); height: 19px; line-height: 19px; }
.vs { width: 16px; background: #f0f0f0; display: flex; flex-direction: column; }
.vs svg { height: 17px; width: 16px; } .vs i { height: 47px; background: #cdcdcd; } .vs .end { margin-top: auto; }
.hs { display: flex; height: 16px; background: #f0f0f0; width: 606px; }
.hs svg { width: 17px; height: 16px; } .hs i { width: 467px; background: #cdcdcd; } .hs .end { margin: 0 16px 0 auto; }
.opts { display: flex; padding: 9px 0 0 33px; }
.opts .btn { margin-top: 16px; }
.gb1 { width: 88px; height: 57px; margin-left: 14px; padding: 11px 0 0 6px; gap: 0; }
.gb .rad { height: 22px; }
.checks { display: grid; grid-template-columns: 104px 89px; grid-auto-rows: 24px; padding: 12px 0 0 7px; color: #848484; white-space: nowrap; width: 201px; }
.checks span { display: flex; align-items: center; gap: 5px; }
.checks span::before { content: ""; width: 13px; height: 13px; border: 1px solid #ccc; background: #fff; flex: none; }
.gb2 { width: 64px; height: 57px; padding: 11px 0 0 6px; margin: 0 9px 0 -1px; }
.opts .open { margin-left: 13px; }

/* chart windows */
.cbody { display: flex; flex: 1; }
.cbody text { font-size: 11.300px; }
.save1 { margin: 343px 0 0 0; }
.tside { padding-top: 55px; }
.gb3 { width: 130px; height: 97px; padding: 20px 0 0 6px; gap: 20px; }
.tside label { display: block; padding-top: 6px; white-space: nowrap; width: 106px; letter-spacing: -.1px; }
.tside .inp { margin-top: 3px; padding: 0 3px; line-height: 20px; }
.save2 { margin: 144px 0 0 31px; }
```
FILE: app.js
```js
const byId = id => document.getElementById(id);
const icon = (name, cls = 'i16') => `<svg class="${cls}"><use href="#${name}"/></svg>`;

/* navigation pane: icon, caption, classes */
byId('side').innerHTML = [
  ['star', 'Quick access', 'top'], ['desk', 'Desktop', 'sub pinned'], ['down', 'Downloads', 'sub pinned'],
  ['docs', 'Documents', 'sub pinned'], ['pics', 'Pictures', 'sub pinned'], ['folder', 'Domino New', 'sub'],
  ['folder', 'NxxxxxxxxxxxNew', 'sub'], ['folder', 'SALT_screenshot', 'sub'], ['folder', 'SaltData2019', 'sub'],
  ['dbx', 'Dropbox', 'top gap'], ['cloud', 'OneDrive', 'top gap'], ['pc', 'This PC', 'top gap'],
  ['cube', '3D Objects', 'sub'], ['desk', 'Desktop', 'sub'], ['docs', 'Documents', 'sub'],
  ['down', 'Downloads', 'sub'], ['music', 'Music', 'sub']
].map(([ic, t, c]) => `<div class="${c}">${icon(ic)}<span>${t}</span>${c.includes('pinned') ? icon('pin', 'pn') : ''}</div>`).join('');

byId('files').innerHTML = [
  ['dat', '2020-3-5AM', '05/03/2020 08:12'], ['dat', '2020-3-6AM', '06/03/2020 08:25'], ['dat', '2020-3-7AM', '07/03/2020 14:41'],
  ['dat', '2020-3-8AM', '08/03/2020 10:01'], ['dat', '2020-3-9AM', '09/03/2020 08:16'], ['dat', '2020-3-9PM', '11/03/2020 18:11'],
  ['dat', '2020-3-10AM', '10/03/2020 08:50'], ['dat', '2020-3-10PM', '11/03/2020 18:13'], ['dat', '2020-3-11AM', '11/03/2020 18:15'],
  ['txt', '2020-3-11AM', '11/03/2020 18:15'], ['dat', '2020-3-12'], ['dat', '2020-3-13'], ['dat', '2020-3-14'], ['dat', '2020-3-15'],
  ['dat', '2020-3-17'], ['dat', '2020-3-17'], ['dat', '2020-3-18'], ['txt', 'cleaners'], ['hicon', 'DataTrans'], ['txt', 'goneclea']
].map(([ic, n, d]) => `<div class="frow"><span>${icon(ic)}${n}</span>${d ? `<span>${d}</span><span>${ic === 'dat' ? 'DAT File' : 'Text Document'}</span>` : ''}</div>`).join('');

byId('rows').innerHTML = `Name SALT% Total Complaint% Avg StdDev 1 2 3 4 5 6 7
A*** 50.6 79 27.85 8.20 1.99 1 1 0 3 4 2 1
B****** 75.0 8 0.00 9.38 0.92 0 0 0 0 0 0 0
D**** 59.6 151 21.19 8.42 1.79 1 2 3 0 3 9 1
G******** 65.1 86 22.09 8.38 1.97 2 0 3 0 2 2 1
T****** 59.7 134 20.15 8.54 1.65 1 0 1 3 2 6 1
A******** 54.3 162 31.48 8.09 2.07 2 3 3 4 5 11 2
*I** 58.7 92 27.17 8.33 2.01 1 0 3 4 0 4 1
D***** 77.8 9 22.22 8.67 1.32 0 0 0 0 0 1 1
A******* 52.2 23 17.39 8.35 2.06 1 0 0 0 1 0 2`.split('\n')
  .map(r => `<div>${r.split(' ').map(c => `<span>${c}</span>`).join('')}</div>`).join('');

const line = (x1, y1, x2, y2, extra = 'stroke="#000"') => `<path d="M${x1} ${y1}L${x2} ${y2}" fill="none" ${extra}/>`;
const text = (x, y, s, anchor = 'start', extra = '') => `<text x="${x}" y="${y}" text-anchor="${anchor}" ${extra}>${s}</text>`;
const crisp = v => Math.floor(v) + 0.5;
const DASH = 'stroke="#000" stroke-dasharray="3 3"';

/* bar chart */
{
  const X = n => crisp(395.3 + 36.75 * (n - 1)), Y = v => crisp(832.3 - 8.533 * v);
  const total = [1.29, .94, 1.52, 1.76, 2.58, 4.92, 12.4, 19.9, 23.1, 31.5];
  const cleaner = [1.29, 1.88, 1.88, 2.46, 3.05, 6.8, 14.2, 14.2, 24.1, 30.2];
  let s = '<clipPath id="cp1"><path d="M380 559h362v278H380z"/></clipPath>';
  for (let n = 1; n <= 10; n++) s += line(X(n), 560, X(n), 836, DASH) + line(X(n), 836, X(n), 840) + text(X(n), 853, n, 'middle');
  for (let v = 0; v <= 30; v += 5) s += line(381, Y(v), 741, Y(v), DASH) + line(376, Y(v), 381, Y(v)) + text(375, Y(v) + 4.5, v, 'end');
  const bar = (x, v, c) => {
    const t = Y(v), b = 831.5, x2 = x + 10.5;
    return `<g fill="${c}" stroke="#000" stroke-linejoin="round"><path d="M${x} ${t}l10-10h10.500l-10 10z"/><path d="M${x2} ${t}l10-10V${b - 10}l-10 10z"/><path d="M${x} ${t}h10.500V${b}h-10.500z"/></g>`;
  };
  s += '<g clip-path="url(#cp1)">';
  for (let n = 1; n <= 10; n++) s += bar(X(n) - 11, total[n - 1], '#3399ff') + bar(X(n), cleaner[n - 1], '#f00');
  s += '</g><path d="M380.500 559.500h361v277h-361z" fill="none" stroke="#000"/>';
  s += text(418, 551, "The cleaner's SALT score compared to the average of the hotel", 'start', 'fill="#00f" textLength="326"');
  s += text(560, 871, 'SALT Score', 'middle') + text(0, 0, 'Percentage', 'middle', 'transform="translate(355 696) rotate(-90)" textLength="59"');
  s += '<path d="M745.500 563.500h71v41h-71z" fill="#fff" stroke="#000"/><path d="M749.500 567.500h19v14h-19z" fill="#f00" stroke="#000"/><path d="M749.500 586.500h19v14h-19z" fill="#39f" stroke="#000"/>';
  s += text(773, 579, 'Cleaner') + text(773, 598, 'Total');
  byId('bars').innerHTML = s;
}

/* monthly line chart */
{
  const X = n => crisp(1091.4 + 26.53 * (n - 1)), Y = v => crisp(843.4 - 2.74 * v);
  const cleaner = [33, 28.5, 28.5, 0, 54, 27.5, 50, 23, 27, 21.5, 20, 46.7];
  const total = [26.3, 26.6, 26.3, 26, 25.6, 26.3, 26.6, 26, 26, 26, 25.6, 25.6];
  let s = '<clipPath id="cp2"><path d="M1087 565h301v283h-301z"/></clipPath>';
  for (let n = 1; n <= 12; n++) s += line(X(n), 566, X(n), 847, DASH) + line(X(n), 847, X(n), 851) + text(X(n), 864, n, 'middle');
  for (let v = 0; v <= 100; v += 10) s += line(1088, Y(v), 1387, Y(v), DASH) + line(1083, Y(v), 1088, Y(v)) + text(1082.5, Y(v) + 4.5, v, 'end');
  const poly = (a, c) => `<polyline points="${a.map((v, i) => X(i + 1) + ',' + Y(v)).join(' ')}" fill="none" stroke="${c}" stroke-width="3" stroke-dasharray="3 4"/>`;
  const square = (x, y) => `<path d="M${x - 4} ${y - 4}h8v8h-8z" fill="#fff" stroke="#000"/>`;
  const dot = (x, y) => `<circle cx="${x}" cy="${y}" r="4" fill="#fff" stroke="#000"/>`;
  s += '<g clip-path="url(#cp2)">' + poly(cleaner, '#f00') + cleaner.map((v, i) => square(X(i + 1), Y(v))).join('');
  s += line(1091, 771, 1387, 773.5, 'stroke="#00f" stroke-width="2"') + line(1091, 757, 1387, 757, 'stroke="#f00" stroke-width="2"');
  s += poly(total, '#00f') + total.map((v, i) => dot(X(i + 1), Y(v))).join('') + '</g>';
  s += '<path d="M1087.500 565.500h300v282h-300z" fill="none" stroke="#000"/>';
  s += text(1207, 554, 'Monthly achievment in time', 'start', 'fill="#00f" textLength="150"');
  s += text(1236, 882, 'Time', 'middle') + text(0, 0, 'Percentage', 'middle', 'transform="translate(1056 705) rotate(-90)" textLength="59"');
  s += '<path d="M1393.500 566.500h124v79h-124z" fill="#fff" stroke="#000"/>';
  s += line(1396, 577.5, 1415, 577.5, 'stroke="#f00" stroke-width="3" stroke-dasharray="3 4"') + square(1407.5, 577.5) + text(1421, 582, 'Cleaner');
  s += line(1396, 596.5, 1415, 596.5, 'stroke="#00f" stroke-width="3" stroke-dasharray="3 4"') + dot(1407.5, 596.5) + text(1421, 601, 'Total');
  s += line(1397, 615, 1418, 615, 'stroke="#00f" stroke-width="2"') + text(1421, 620, 'Linear Fit To Total', 'start', 'textLength="91"');
  s += line(1397, 634, 1418, 634, 'stroke="#f00" stroke-width="2"') + text(1421, 639, 'Cleaner Average', 'start', 'textLength="86"');
  byId('lines').innerHTML = s;
}
```
